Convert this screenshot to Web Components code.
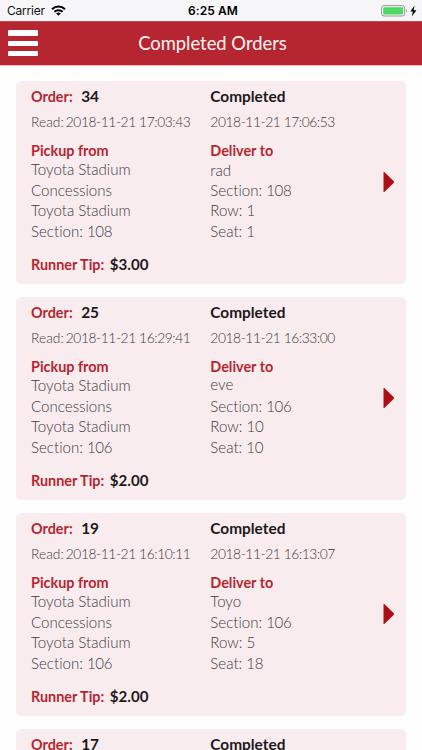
<!DOCTYPE html>
<html lang="en">
<head>
<meta charset="utf-8">
<title>Completed Orders</title>
<style>
html, body { margin: 0; height: 100%; overflow: hidden; background: #fefefe; }
</style>
</head>
<body>
<orders-app></orders-app>
<script>
class StatusBar extends HTMLElement {
  constructor() {
    super();
    this.attachShadow({ mode: 'open' }).innerHTML = `
      <style>
        :host { display: grid; grid-template-columns: 1fr auto 1fr; align-items: center; height: 20.5px; box-sizing: border-box; padding: 1px 5px 0 7px; background: #f6f6f8; color: #111; font: 12px/19px Inter, "Liberation Sans", sans-serif; }
        .left, .right { display: flex; align-items: center; }
        .left { gap: 6px; }
        .right { justify-content: flex-end; }
        .carrier { letter-spacing: -0.2px; }
        .time { font-weight: 600; letter-spacing: 0.1px; color: #000; padding-left: 2px; }
        svg { display: block; }
      </style>
      <div class="left"><span class="carrier">Carrier</span>
        <svg width="15" height="11" viewBox="0 0 15 11" fill="none" stroke="#000" stroke-width="2"><path d="M1 4.3C4.6.7 10.4.7 14 4.3M3.4 6.8c2.3-2.2 5.9-2.2 8.2 0"/><path d="M7.5 10.7 5.2 8.4c1.3-1.2 3.3-1.2 4.6 0z" fill="#000" stroke="none"/></svg>
      </div>
      <span class="time">6:25 AM</span>
      <div class="right">
        <svg width="36" height="12" viewBox="0 0 36 12"><rect x=".6" y=".6" width="23" height="10.4" rx="2.4" fill="#f6f6f8" stroke="#969899"/><rect x="2.2" y="2.2" width="19.8" height="7.2" rx="1" fill="#4cd964"/><path d="M25.1 3.9c1.4.5 1.4 3.3 0 3.8z" fill="#969899"/><path d="M33.6.5 29.3 6.6h2.6l-1.2 4.8 4.8-6.2h-2.9z" fill="#000"/></svg>
      </div>`;
  }
}
customElements.define('status-bar', StatusBar);

class NavBar extends HTMLElement {
  constructor() {
    super();
    this.attachShadow({ mode: 'open' }).innerHTML = `
      <style>
        :host { display: grid; grid-template-columns: 40px 1fr 40px; align-items: center; height: 44.5px; box-sizing: border-box; background: #b52630; color: #fff6f6; border-top: 1px solid #c04a53; box-shadow: 0 1px 0 #f2b4b9; font: 18.4px/24px Lato, sans-serif; }
        button { display: flex; flex-direction: column; gap: 5px; padding: 0 0 0 8px; border: 0; background: none; }
        i { display: block; width: 30px; height: 5.2px; border-radius: 1px; background: #fff; }
        .title { text-align: center; padding-left: 3px; }
      </style>
      <button aria-label="Menu"><i></i><i></i><i></i></button>
      <div class="title"><slot></slot></div>`;
  }
}
customElements.define('nav-bar', NavBar);

class OrderCard extends HTMLElement {
  connectedCallback() {
    const d = this.dataset;
    const lines = s => s.split('|').map(t => `<div>${t.replace(/\d+/, '<span class="digits">$&</span>')}</div>`).join('');
    const details = d.read ? `
        <div class="date">Read:<span class="stamp read">${d.read}</span></div>
        <div class="date"><span class="stamp">${d.done}</span></div>
        <div class="head label">Pickup from</div>
        <div class="head label">Deliver to</div>
        <div class="body">${lines(d.from)}</div>
        <div class="body"><div class="name">${d.name}</div>${lines(d.seat)}</div>
        <div class="total"><span class="label">Runner Tip:</span><span class="strong tip">${d.tip}</span></div>` : '';
    this.attachShadow({ mode: 'open' }).innerHTML = `
      <style>
        :host { display: grid; grid-template-columns: 1fr 16px; align-items: center; height: 203px; box-sizing: border-box; flex: none; padding: 0 9px 0 15px; border-radius: 5px; background: #f8ecee; color: #403b3e; font: 300 15.1px/20.4px Lato, sans-serif; font-variant-ligatures: none; white-space: nowrap; }
        .grid { display: grid; align-self: start; grid-template-columns: 179.3px 1fr; grid-template-rows: 24px 27px 24.4px 81.4px 35.6px; padding-top: 3px; }
        .label { color: #b52630; font-weight: 700; font-size: 14.4px; }
        .strong { color: #1c191b; font-weight: 700; font-size: 15.4px; }
        .num { margin-left: 8.6px; letter-spacing: -0.2px; }
        .tip { margin-left: 5.6px; font-size: 15.1px; }
        .row { line-height: 24px; }
        .date { font-size: 13.8px; line-height: 27.2px; }
        .stamp { letter-spacing: -0.42px; }
        .read { margin-left: 2px; }
        .digits { letter-spacing: -0.4px; }
        .head { padding-top: 7.2px; line-height: 18.4px; }
        .total { padding-top: 11.6px; line-height: 24px; }
        .name { position: relative; top: var(--shift, 0px); }
        svg { display: block; position: relative; top: -1px; }
      </style>
      <div class="grid">
        <div class="row"><span class="label">Order:</span><span class="strong num">${d.order}</span></div>
        <div class="row strong">Completed</div>${details}
      </div>
      <svg width="16" height="22" viewBox="0 0 16 22"><path d="M2.5 1.8q0-1.5 1.1-.5L12.6 10.1q.9.9 0 1.8L3.6 20.7q-1.1 1-1.1-.5z" fill="#ad1014"/></svg>`;
  }
}
customElements.define('order-card', OrderCard);

class OrdersApp extends HTMLElement {
  constructor() {
    super();
    this.attachShadow({ mode: 'open' }).innerHTML = `
      <style>
        :host { display: flex; flex-direction: column; width: 422px; height: 750px; overflow: hidden; background: #fefefe; }
        status-bar, nav-bar { flex: none; }
        main { display: flex; flex-direction: column; gap: 13px; padding: 16px 16px 0 16px; overflow: hidden; flex: 1; min-height: 0; }
      </style>
      <status-bar></status-bar>
      <nav-bar>Completed Orders</nav-bar>
      <main>
        <order-card data-order="34" data-read="2018-11-21 17:03:43" data-done="2018-11-21 17:06:53" data-from="Toyota Stadium|Concessions|Toyota Stadium|Section: 108" data-name="rad" style="--shift: 1px" data-seat="Section: 108|Row: 1|Seat: 1" data-tip="$3.00"></order-card>
        <order-card data-order="25" data-read="2018-11-21 16:29:41" data-done="2018-11-21 16:33:00" data-from="Toyota Stadium|Concessions|Toyota Stadium|Section: 106" data-name="eve" style="--shift: -1px" data-seat="Section: 106|Row: 10|Seat: 10" data-tip="$2.00"></order-card>
        <order-card data-order="19" data-read="2018-11-21 16:10:11" data-done="2018-11-21 16:13:07" data-from="Toyota Stadium|Concessions|Toyota Stadium|Section: 106" data-name="Toyo" data-seat="Section: 106|Row: 5|Seat: 18" data-tip="$2.00"></order-card>
        <order-card data-order="17"></order-card>
      </main>`;
  }
}
customElements.define('orders-app', OrdersApp);
</script>
</body>
</html>
